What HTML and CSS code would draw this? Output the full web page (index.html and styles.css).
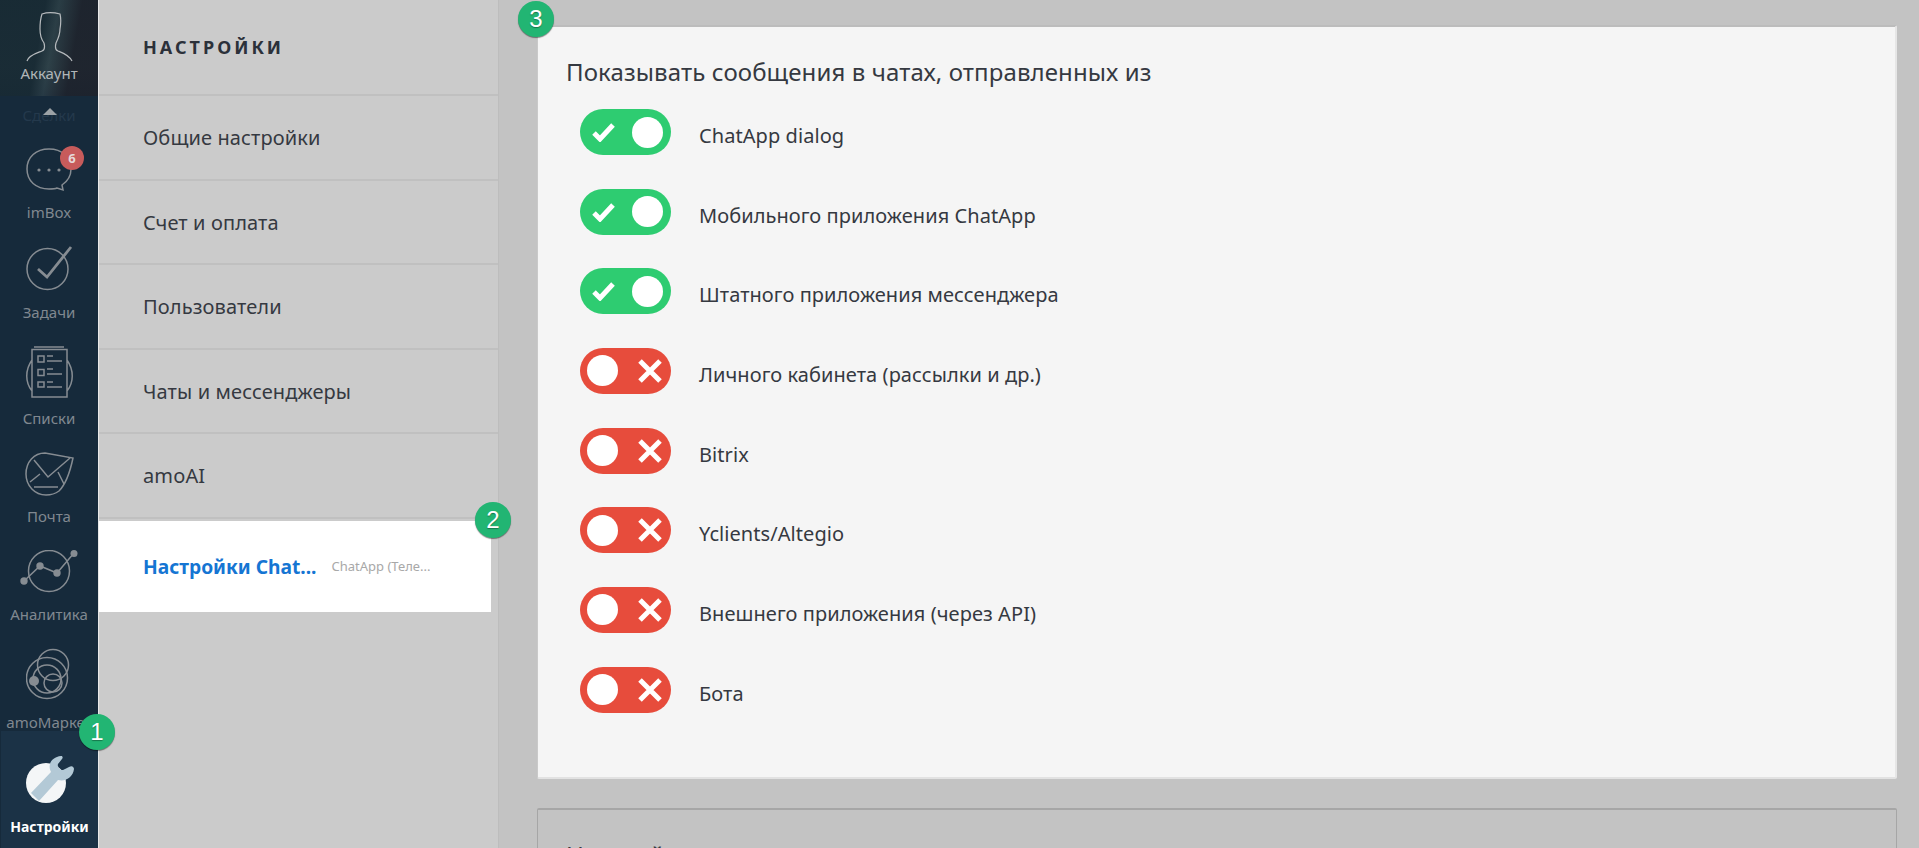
FILE: index.html
```html
<!DOCTYPE html>
<html lang="ru">
<head>
<meta charset="utf-8">
<title>Настройки</title>
<link rel="stylesheet" href="styles.css">
</head>
<body>
<aside class="nav">
  <div class="account">
    <svg class="account-icon" width="56" height="54" viewBox="0 0 56 54"><path d="M6 50c2-6 10-8 15-10 3-1 3-4 2-8-3-4-4-9-4-14 0-8 1-12 2-15 6-2 14-1 18 0 1 4 1 9 0 15 0 5-2 10-4 14-1 4-1 7 2 8 5 2 11 4 14 10" /></svg>
    <span>Аккаунт</span>
  </div>
  <div class="deals"><span class="deals-label">Сделки</span><i class="up"></i></div>
  <div class="item">
    <div class="ico">
      <svg width="48" height="44" viewBox="0 0 48 44"><path d="M24 1C11 1 2 9 2 21s9 20 22 20c3 0 6 0 8-1l6 2-1-5c6-4 9-10 9-16C46 9 37 1 24 1z"/><circle class="fill" cx="14" cy="22" r="1.6"/><circle class="fill" cx="24" cy="22" r="1.6"/><circle class="fill" cx="34" cy="22" r="1.6"/></svg>
      <b class="count">6</b>
    </div>
    <span>imBox</span>
  </div>
  <div class="item">
    <div class="ico"><svg width="48" height="46" viewBox="0 0 48 46"><circle cx="22.5" cy="23" r="20.5"/><path class="thick" d="M13 23l9 8L46 1"/></svg></div>
    <span>Задачи</span>
  </div>
  <div class="item">
    <div class="ico"><svg width="48" height="52" viewBox="0 0 48 52"><path d="M9 1h30M7 3.5h35V51H7zM7 14c-7 10-7 22 0 31M42 14c7 10 7 22 0 31"/><path d="M13 10h6v6h-6zM13 23.500h6v6h-6zM13 36h6v5h-6zM22 10h6M22 15h15M22 23h6M22 28h15M22 36h6M22 41h15"/></svg></div>
    <span>Списки</span>
  </div>
  <div class="item">
    <div class="ico"><svg width="50" height="44" viewBox="0 0 50 44"><path d="M21 1C10 1 2 10 2 22s9 21 20 21c5 0 9-1 13-4 5-5 10-14 14-33L21 1z"/><path d="M10 8l14 17L46 6M6 30l10-8M34 20l6 12M10 35h24"/></svg></div>
    <span>Почта</span>
  </div>
  <div class="item">
    <div class="ico"><svg width="58" height="44" viewBox="0 0 58 44"><circle cx="29" cy="21" r="20.500"/><path d="M4 31l16-15 17 7L54 3"/><circle class="fill" cx="4" cy="31" r="3.700"/><circle class="fill" cx="20" cy="16" r="3.700"/><circle class="fill" cx="37" cy="23" r="3.700"/><circle class="fill" cx="54" cy="3.500" r="3.500"/></svg></div>
    <span>Аналитика</span>
  </div>
  <div class="item">
    <div class="ico"><svg width="46" height="54" viewBox="0 0 46 54"><circle cx="21" cy="30" r="20.500"/><circle cx="27" cy="17" r="15.500"/><circle cx="21" cy="31" r="14"/><circle cx="27" cy="35" r="9"/><circle class="fill" cx="8" cy="33" r="5"/></svg></div>
    <span>amoМаркет</span>
  </div>
  <div class="settings-tab">
    <svg width="50" height="50" viewBox="0 0 50 50"><circle class="disc" cx="21" cy="28" r="20"/><path class="wrench" d="M6 38L26 17C22 9 27 2 36 1c2 0 2 2 1 3l-4 5c-1 3 2 6 5 6l6-3c3-2 5 0 5 2-1 8-8 13-16 11L14 46z"/></svg>
    <span>Настройки</span>
  </div>
</aside>

<section class="panel">
  <h1 class="panel-title">Настройки</h1>
  <a class="panel-row">Общие настройки</a>
  <a class="panel-row">Счет и оплата</a>
  <a class="panel-row">Пользователи</a>
  <a class="panel-row">Чаты и мессенджеры</a>
  <a class="panel-row">amoAI</a>
  <a class="panel-active"><strong>Настройки Chat...</strong><small>ChatApp (Теле...</small></a>
</section>

<main class="main">
  <section class="card">
    <h2 class="card-title">Показывать сообщения в чатах, отправленных из</h2>
    <ul class="list">
      <li class="row"><span class="toggle on"><svg width="24" height="20" viewBox="0 0 24 20"><path d="M2 11l6 6L21 3"/></svg><i></i></span><span class="label">ChatApp dialog</span></li>
      <li class="row"><span class="toggle on"><svg width="24" height="20" viewBox="0 0 24 20"><path d="M2 11l6 6L21 3"/></svg><i></i></span><span class="label">Мобильного приложения ChatApp</span></li>
      <li class="row"><span class="toggle on"><svg width="24" height="20" viewBox="0 0 24 20"><path d="M2 11l6 6L21 3"/></svg><i></i></span><span class="label">Штатного приложения мессенджера</span></li>
      <li class="row"><span class="toggle off"><i></i><svg width="24" height="24" viewBox="0 0 24 24"><path d="M2 2l20 20M22 2L2 22"/></svg></span><span class="label">Личного кабинета (рассылки и др.)</span></li>
      <li class="row"><span class="toggle off"><i></i><svg width="24" height="24" viewBox="0 0 24 24"><path d="M2 2l20 20M22 2L2 22"/></svg></span><span class="label">Bitrix</span></li>
      <li class="row"><span class="toggle off"><i></i><svg width="24" height="24" viewBox="0 0 24 24"><path d="M2 2l20 20M22 2L2 22"/></svg></span><span class="label">Yclients/Altegio</span></li>
      <li class="row"><span class="toggle off"><i></i><svg width="24" height="24" viewBox="0 0 24 24"><path d="M2 2l20 20M22 2L2 22"/></svg></span><span class="label">Внешнего приложения (через API)</span></li>
      <li class="row"><span class="toggle off"><i></i><svg width="24" height="24" viewBox="0 0 24 24"><path d="M2 2l20 20M22 2L2 22"/></svg></span><span class="label">Бота</span></li>
    </ul>
  </section>
  <section class="card card-next"><h2 class="card-title">Настройки</h2></section>
</main>

<span class="marker marker-1">1</span>
<span class="marker marker-2">2</span>
<span class="marker marker-3">3</span>
</body>
</html>
```
FILE: styles.css
```css
* { box-sizing: border-box; }
html, body { height: 100%; }
body {
  margin: 0;
  display: flex;
  height: 848px;
  overflow: hidden;
  background: #c3c3c3;
  color: #353941;
  font-family: "Noto Sans", "Open Sans", sans-serif;
}
.nav {
  width: 98px;
  flex: none;
  height: 848px;
  background: #162a3b;
  display: flex;
  flex-direction: column;
  color: #808890;
  font-size: 15px;
  overflow: hidden;
}
.nav svg { fill: none; stroke: #868c92; stroke-width: 1.5; display: block; }
.nav svg .fill { fill: #868c92; stroke: none; }
.nav svg .thick { stroke-width: 2.800; }
.account {
  height: 96px;
  flex: none;
  display: flex;
  flex-direction: column;
  align-items: center;
  padding-top: 11px;
  background:
    linear-gradient(100deg, rgba(24,42,52,.85) 0 40%, rgba(58,76,84,.45) 52%, rgba(30,34,44,.85) 72%),
    linear-gradient(180deg, #1c3038, #24383f 70%, #182b38);
  color: #b0b5b8;
}
.account-icon { margin-bottom: -2px; }
.nav .account .account-icon { stroke: #b6babd; stroke-width: 1.200; }
.deals {
  height: 28px;
  flex: none;
  position: relative;
  text-align: center;
}
.deals-label { color: #24394c; line-height: 38px; }
.up {
  position: absolute;
  left: 43px;
  top: 12px;
  border: 7px solid transparent;
  border-top: 0;
  border-bottom-color: #9ca2a6;
}
.item {
  flex: none;
  display: flex;
  flex-direction: column;
  align-items: center;
  padding: 24px 0 0;
  line-height: 20px;
  white-space: nowrap;
  gap: 10px;
}
.ico { position: relative; }
.count {
  position: absolute;
  left: 35px;
  top: -2px;
  width: 24px;
  height: 24px;
  border-radius: 50%;
  background: #c75b5b;
  color: #e6d9d9;
  font-size: 13px;
  line-height: 24px;
  text-align: center;
}
.settings-tab {
  margin: -1px 0 0 1px;
  height: 117px;
  flex: none;
  background: #1b3246;
  display: flex;
  flex-direction: column;
  align-items: center;
  padding: 24px 0 0 0;
  color: #fff;
  font-weight: 700;
  font-size: 14px;
  line-height: 20px;
  gap: 12px;
}
.nav .settings-tab svg { stroke: none; }
.disc { fill: #f4f6f7; }
.wrench { fill: #b3c9d6; }
.panel {
  width: 401px;
  flex: none;
  height: 848px;
  background: #cbcbcb;
  border-left: 1px solid #e8e8e8;
  border-right: 1px solid #bdbdbd;
}
.panel-title {
  margin: 0;
  height: 96px;
  padding: 0 0 0 44px;
  border-bottom: 2px solid #c0c0c0;
  font-size: 18px;
  line-height: 94px;
  font-weight: 700;
  letter-spacing: 3px;
  text-transform: uppercase;
  color: #2c313a;
}
.panel-row {
  display: block;
  height: 84.5px;
  padding-left: 44px;
  border-bottom: 2px solid #c0c0c0;
  font-size: 20px;
  letter-spacing: .12px;
  line-height: 84px;
  color: #353941;
}
.panel-active {
  margin-top: 2px;
  width: 392px;
  height: 91px;
  background: #fff;
  padding-left: 44px;
  display: flex;
  align-items: center;
  gap: 15px;
}
.panel-active strong { color: #1575d3; font-size: 19.200px; font-weight: 700; }
.panel-active small { color: #a8a8a8; font-size: 13px; font-weight: 400; }
.main {
  flex: 1;
  height: 848px;
  padding: 25px 22px 0 38px;
  overflow: hidden;
}
.card {
  height: 754px;
  background: #f5f5f5;
  border: 1px solid #c9c9c9;
  border-top: 2px solid #bcbcbc;
  border-right: 2px solid #e6e6e6;
  border-bottom: 2px solid #e2e2e2;
  border-radius: 2px;
  padding: 29px 0 0 28px;
}
.card-title {
  margin: 0;
  font-size: 24px;
  line-height: 32px;
  letter-spacing: .11px;
  font-weight: 400;
  color: #353941;
}
.list {
  list-style: none;
  margin: 21px 0 0;
  padding: 0;
}
.row {
  height: 79.67px;
  padding-left: 14px;
  display: flex;
  align-items: flex-start;
  font-size: 20px;
  line-height: 45px;
  color: #353941;
  white-space: nowrap;
}
.label { padding-top: 4px; letter-spacing: .07px; }
.toggle {
  width: 91px;
  height: 46px;
  border-radius: 23px;
  margin-right: 28px;
  display: flex;
  align-items: center;
  justify-content: space-between;
  padding: 0 8px 0 7px;
}
.toggle i {
  width: 31px;
  height: 31px;
  border-radius: 50%;
  background: #fff;
  flex: none;
}
.toggle svg { fill: none; stroke: #fff; stroke-width: 5; flex: none; }
.on { background: #2ecc71; padding-left: 12px; }
.off { background: #e74c3c; padding-right: 9px; }
.card-next {
  margin-top: 29px;
  background: #c3c3c3;
  border: 1px solid #a6a6a6;
  border-top: 2px solid #a6a6a6;
  border-bottom: 0;
}
.marker {
  position: absolute;
  width: 36px;
  height: 36px;
  border-radius: 50%;
  background: #22b573;
  color: #fff;
  font-family: "Liberation Sans", sans-serif;
  font-size: 24px;
  line-height: 36px;
  text-align: center;
  box-shadow: 0 1px 1px rgba(0,0,0,.45);
  text-shadow: 0 1px 1px rgba(0,0,0,.35);
}
.marker-1 { left: 79px; top: 714px; }
.marker-2 { left: 475px; top: 502px; }
.marker-3 { left: 518px; top: 1px; }
```
